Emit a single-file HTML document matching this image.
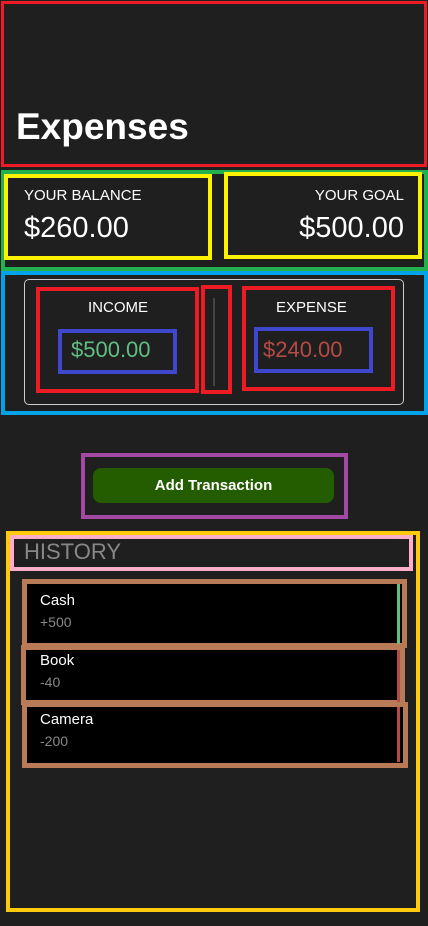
<!DOCTYPE html><html><head><style>
body{margin:0;width:428px;height:926px;background:#1f1f1f;position:relative;overflow:hidden;font-family:"Liberation Sans",sans-serif;color:#fff}
div{position:absolute;box-sizing:border-box}
.t{white-space:nowrap}
</style></head><body>
<div style="left:1px;top:1px;width:426px;height:166px;border:3px solid #ed1c24"></div>
<div class="t" style="left:16px;top:106px;font-size:37px;font-weight:bold">Expenses</div>
<div style="left:1px;top:170px;width:427px;height:101px;border:4px solid #22b14c"></div>
<div style="left:4px;top:174px;width:208px;height:86px;border:4px solid #fff200"></div>
<div class="t" style="left:24px;top:187px;font-size:15px">YOUR BALANCE</div>
<div class="t" style="left:24px;top:212px;font-size:29px">$260.00</div>
<div style="left:224px;top:172px;width:198px;height:87px;border:4px solid #fff200"></div>
<div class="t" style="right:24px;top:187px;font-size:15px">YOUR GOAL</div>
<div class="t" style="right:24px;top:212px;font-size:29px">$500.00</div>
<div style="left:1px;top:271px;width:427px;height:144px;border:4px solid #00a2e8"></div>
<div style="left:24px;top:279px;width:380px;height:126px;border:1px solid #ccc;border-radius:5px"></div>
<div style="left:36px;top:287px;width:163px;height:106px;border:4px solid #ed1c24"></div>
<div class="t" style="left:88px;top:299px;font-size:15px">INCOME</div>
<div style="left:58px;top:329px;width:119px;height:45px;border:4px solid #3f48cc"></div>
<div class="t" style="left:71px;top:337px;font-size:22px;color:#5fbf82">$500.00</div>
<div style="left:201px;top:285px;width:31px;height:109px;border:4px solid #ed1c24"></div>
<div style="left:213px;top:298px;width:2px;height:88px;background:#444"></div>
<div style="left:242px;top:286px;width:153px;height:105px;border:4px solid #ed1c24"></div>
<div class="t" style="left:276px;top:299px;font-size:15px">EXPENSE</div>
<div style="left:254px;top:327px;width:119px;height:46px;border:4px solid #3f48cc"></div>
<div class="t" style="left:263px;top:337px;font-size:22px;color:#b64a45">$240.00</div>
<div style="left:81px;top:453px;width:267px;height:66px;border:4px solid #a349a4"></div>
<div style="left:93px;top:468px;width:241px;height:35px;background:#245c00;border-radius:8px;font-weight:bold;font-size:15px;text-align:center;line-height:35px">Add Transaction</div>
<div style="left:6px;top:531px;width:414px;height:381px;border:4px solid #ffc90e"></div>
<div style="left:10px;top:535px;width:403px;height:36px;border:4px solid #ffaec9"></div>
<div class="t" style="left:24px;top:539px;font-size:22px;color:#888">HISTORY</div>
<div style="left:22px;top:579px;width:385px;height:69px;border:5px solid #b97a57;background:#000"></div>
<div style="left:397px;top:584px;width:3px;height:60px;background:#5fbf82"></div>
<div class="t" style="left:40px;top:592px;font-size:15px">Cash</div>
<div class="t" style="left:40px;top:614px;font-size:14px;color:#888">+500</div>
<div style="left:21px;top:645px;width:384px;height:60px;border:5px solid #b97a57;background:#000"></div>
<div style="left:397px;top:650px;width:3px;height:52px;background:#b64a45"></div>
<div class="t" style="left:40px;top:652px;font-size:15px">Book</div>
<div class="t" style="left:40px;top:674px;font-size:14px;color:#888">-40</div>
<div style="left:22px;top:702px;width:386px;height:66px;border:5px solid #b97a57;background:#000"></div>
<div style="left:397px;top:707px;width:3px;height:55px;background:#b64a45"></div>
<div class="t" style="left:40px;top:711px;font-size:15px">Camera</div>
<div class="t" style="left:40px;top:733px;font-size:14px;color:#888">-200</div>
</body></html>
